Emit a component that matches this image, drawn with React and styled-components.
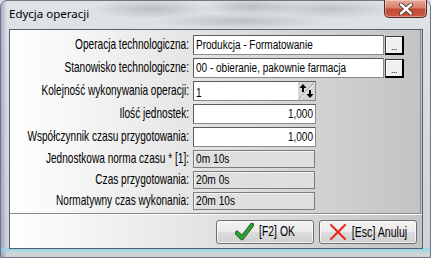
import { Fragment } from 'react';
import styled, { createGlobalStyle } from 'styled-components';

const GlobalStyle = createGlobalStyle`
  html, body {
    margin: 0;
    padding: 0;
    width: 431px;
    height: 258px;
    overflow: hidden;
    background: #d6dadf;
  }
`;

// Narrow Windows font: Arial widths at a small size, stretched up to the full height
const Txt = styled.span`
  display: inline-block;
  font-family: "Liberation Sans", Arial, sans-serif;
  font-size: ${p => p.$size || 10}px;
  line-height: 1;
  transform: scaleY(${p => p.$sy || 1.3});
  white-space: nowrap;
  color: #000;
`;

const Window = styled.div`
  box-sizing: border-box;
  width: 431px;
  height: 258px;
  display: flex;
  flex-direction: column;
  padding: 0 7px 8px 8px;
  border: 1px solid #6f7780;
  border-radius: 7px 7px 0 0;
  background:
    radial-gradient(ellipse 60px 10px at 150px 8px, rgba(120, 125, 130, 0.35), transparent),
    radial-gradient(ellipse 50px 9px at 250px 6px, rgba(120, 125, 130, 0.35), transparent),
    radial-gradient(ellipse 70px 10px at 330px 8px, rgba(120, 125, 130, 0.3), transparent),
    radial-gradient(ellipse 90px 8px at 240px 20px, rgba(110, 115, 120, 0.3), transparent),
    linear-gradient(to bottom, transparent 246px, #8fd6ea 248px, transparent 252px),
    linear-gradient(to right, rgba(110, 100, 170, 0.45) 0px, transparent 6px),
    linear-gradient(to bottom, #dfe2e6, #cfd3d8);
`;

const TitleBar = styled.div`
  height: 28px;
  display: flex;
  justify-content: space-between;
  align-items: flex-start;
  margin-right: -4px;
`;

const Title = styled.div`
  padding-top: 5px;
  font-family: "Noto Sans", sans-serif;
  font-size: 11.5px;
  color: #000;
`;

const CloseButton = styled.div`
  box-sizing: border-box;
  width: 43px;
  height: 18px;
  margin-top: -1px;
  display: flex;
  align-items: center;
  justify-content: center;
  border: 1px solid #5a2a24;
  border-top: none;
  border-radius: 0 0 5px 5px;
  background: linear-gradient(to bottom, #e9a996 0%, #d7816c 45%, #c24a33 55%, #c95a40 100%);
  box-shadow: inset 0 0 0 1px rgba(255, 255, 255, 0.35);
`;

const Client = styled.div`
  flex: 1;
  display: flex;
  flex-direction: column;
  border: 1px solid #58606a;
  background: linear-gradient(to right, #ffffff, #c3c3c3);
`;

const FormPanel = styled.div`
  display: grid;
  grid-template-columns: 180px 1fr;
  column-gap: 3px;
  row-gap: 3px;
  padding: 5px 0 3px 0;
  border-right: 1px solid #8c8c8c;
  border-bottom: 1px solid #8c8c8c;
  margin-right: 1px;
`;

const Label = styled.div`
  display: flex;
  align-items: center;
  justify-content: flex-end;
  height: ${p => (p.$short ? 18 : 20)}px;
  padding-right: 1px;
`;

const FieldRow = styled.div`
  display: flex;
  align-items: center;
  gap: 1px;
`;

const TextBox = styled.div`
  box-sizing: border-box;
  width: ${p => p.$width}px;
  height: 20px;
  display: flex;
  align-items: center;
  justify-content: ${p => (p.$right ? 'flex-end' : 'flex-start')};
  padding: 0 ${p => (p.$spin ? 0 : 2)}px 0 2px;
  background: #fff;
  border: 1px solid #5c5c5c;
  border-right-color: #8a8a8a;
  border-bottom-color: #8a8a8a;
`;

const SpinText = styled.div`
  flex: 1;
`;

const DotsButton = styled.div`
  box-sizing: border-box;
  width: 19px;
  height: 19px;
  display: flex;
  align-items: flex-end;
  justify-content: center;
  padding-bottom: 3px;
  background: #f0f0f0;
  border-style: solid;
  border-color: #3a3a3a #000 #000 #3a3a3a;
  border-width: 1px 2px 2px 1px;
  box-shadow: inset 1px 1px #fff;
  font-family: "Liberation Sans", sans-serif;
  font-size: 9px;
  line-height: 6px;
  letter-spacing: -0.5px;
`;

const ReadOnly = styled.div`
  box-sizing: border-box;
  width: 122px;
  height: 18px;
  display: flex;
  align-items: center;
  padding: 0 2px;
  background: #dfdfdf;
  border: 1px solid #7c7c7c;
  box-shadow: inset 1px 1px rgba(255, 255, 255, 0.6);
`;

const ButtonBar = styled.div`
  flex: 1;
  display: flex;
  justify-content: flex-end;
  align-items: flex-start;
  gap: 5px;
  padding: 5px 5px 0 0;
  border-top: 1px solid #fff;
`;

const DialogButton = styled.div`
  box-sizing: border-box;
  width: 98px;
  height: 24px;
  display: flex;
  align-items: center;
  justify-content: center;
  gap: 5px;
  border: 1px solid #707070;
  border-radius: 3px;
  background: linear-gradient(to bottom, #f2f2f2 0%, #ebebeb 50%, #dddddd 50%, #cfcfcf 100%);
  box-shadow: inset 0 0 0 1px rgba(255, 255, 255, 0.7);
`;

function SpinIcon() {
  return (
    <svg width="17" height="18" viewBox="0 0 17 18">
      <rect x="0" y="0" width="17" height="18" fill="#d6d6d6" />
      <line x1="1" y1="17" x2="16" y2="1" stroke="#8a8a8a" strokeWidth="1" />
      <line x1="2" y1="17" x2="17" y2="1" stroke="#fff" strokeWidth="1" />
      <path d="M5 2 L8.5 6 L6 6 L6 10 L4 10 L4 6 L1.5 6 Z" fill="#000" />
      <path d="M12 16 L8.5 12 L11 12 L11 8 L13 8 L13 12 L15.5 12 Z" fill="#000" />
    </svg>
  );
}

function CheckIcon() {
  return (
    <svg width="19" height="18" viewBox="0 0 19 18">
      <path d="M2 10 L7 15 L17 2" fill="none" stroke="#1f5c1f" strokeWidth="4.5" strokeLinejoin="round" strokeLinecap="round" />
      <path d="M2 10 L7 15 L17 2" fill="none" stroke="#2ea82e" strokeWidth="2.8" strokeLinejoin="round" strokeLinecap="round" />
    </svg>
  );
}

function CrossIcon() {
  return (
    <svg width="18" height="18" viewBox="0 0 18 18">
      <path d="M2 2 L16 16 M16 2 L2 16" stroke="#e2321e" strokeWidth="2.2" strokeLinecap="round" />
    </svg>
  );
}

const readOnlyRows = [
  ['Jednostkowa norma czasu * [1]:', '0m 10s'],
  ['Czas przygotowania:', '20m 0s'],
  ['Normatywny czas wykonania:', '20m 10s'],
];

export default function App() {
  return (
    <>
      <GlobalStyle />
      <Window>
        <TitleBar>
          <Title>Edycja operacji</Title>
          <CloseButton>
            <svg width="14" height="12" viewBox="0 0 14 12">
              <path d="M2 1.5 L12 10.5 M12 1.5 L2 10.5" stroke="#3a2a28" strokeWidth="4" strokeLinecap="round" />
              <path d="M2 1.5 L12 10.5 M12 1.5 L2 10.5" stroke="#fff" strokeWidth="2.4" strokeLinecap="round" />
            </svg>
          </CloseButton>
        </TitleBar>
        <Client>
          <FormPanel>
            <Label><Txt $size={10.1} $sy={1.38}>Operacja technologiczna:</Txt></Label>
            <FieldRow>
              <TextBox $width={191}><Txt $size={10} $sy={1.25}>Produkcja - Formatowanie</Txt></TextBox>
              <DotsButton>...</DotsButton>
            </FieldRow>
            <Label><Txt $size={10.1} $sy={1.38}>Stanowisko technologiczne:</Txt></Label>
            <FieldRow>
              <TextBox $width={191}><Txt $size={10} $sy={1.25}>00 - obieranie, pakownie farmacja</Txt></TextBox>
              <DotsButton>...</DotsButton>
            </FieldRow>
            <Label><Txt $size={10.1} $sy={1.38}>Kolejność wykonywania operacji:</Txt></Label>
            <FieldRow>
              <TextBox $width={123} $spin>
                <SpinText><Txt $size={10} $sy={1.25}>1</Txt></SpinText>
                <SpinIcon />
              </TextBox>
            </FieldRow>
            <Label><Txt $size={10.1} $sy={1.38}>Ilość jednostek:</Txt></Label>
            <FieldRow>
              <TextBox $width={123} $right><Txt $size={10} $sy={1.25}>1,000</Txt></TextBox>
            </FieldRow>
            <Label><Txt $size={10.1} $sy={1.38}>Współczynnik czasu przygotowania:</Txt></Label>
            <FieldRow>
              <TextBox $width={123} $right><Txt $size={10} $sy={1.25}>1,000</Txt></TextBox>
            </FieldRow>
            {readOnlyRows.map(([label, value]) => (
              <Fragment key={label}>
                <Label $short><Txt $size={10.1} $sy={1.38}>{label}</Txt></Label>
                <ReadOnly><Txt $size={10.2} $sy={1.25}>{value}</Txt></ReadOnly>
              </Fragment>
            ))}
          </FormPanel>
          <ButtonBar>
            <DialogButton>
              <CheckIcon />
              <Txt $size={10.4} $sy={1.35}>[F2] OK</Txt>
            </DialogButton>
            <DialogButton>
              <CrossIcon />
              <Txt $size={10.6} $sy={1.35}>[Esc] Anuluj</Txt>
            </DialogButton>
          </ButtonBar>
        </Client>
      </Window>
    </>
  );
}
